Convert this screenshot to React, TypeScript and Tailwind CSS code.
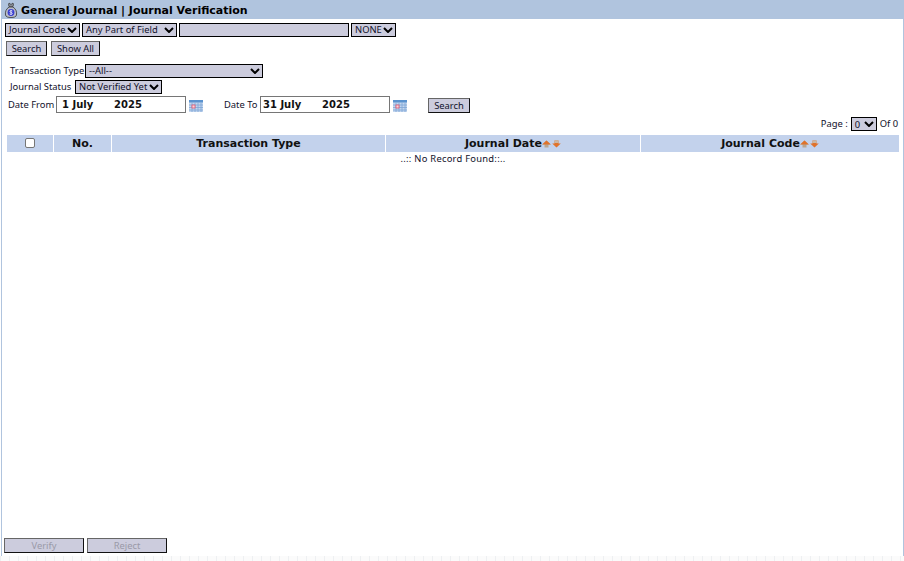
const tahoma = "[font-family:'Noto_Sans','DejaVu_Sans',sans-serif]";

function MoneyBag() {
  return (
    <svg width="14" height="16" viewBox="0 0 14 16" className="shrink-0">
      <path d="M5 1 L7 2.5 L9 1 L9.5 3 L8.5 5 L5.5 5 L4.5 3 Z" fill="#8a8f99" stroke="#333" strokeWidth="0.7" />
      <path d="M5 5 C2 7 1 10 1.5 13 C2 15 4 15.5 7 15.5 C10 15.5 12 15 12.5 13 C13 10 12 7 9 5 Z" fill="#b9bdc9" stroke="#333" strokeWidth="0.8" />
      <circle cx="7" cy="10.5" r="3.4" fill="#3a3fd0" />
      <path d="M8.4 9 C7.6 8.3 5.8 8.5 5.9 9.6 C6 10.7 8.3 10.2 8.3 11.4 C8.3 12.5 6.3 12.6 5.6 11.9 M7 7.8 V13" fill="none" stroke="#fff" strokeWidth="0.7" />
    </svg>
  );
}

function Calendar() {
  return (
    <svg width="14" height="12" viewBox="0 0 14 12" className="block shrink-0">
      <rect x="0" y="0" width="14" height="12" fill="#c4d6ee" />
      <rect x="0" y="0" width="14" height="2.5" fill="#5b93cf" />
      <path d="M0 5H14M0 7.5H14M0 10H14M3 2.5V12M6 2.5V12M9 2.5V12M12 2.5V12" stroke="#7fa6d6" strokeWidth="0.8" />
      <rect x="3" y="5" width="3" height="3" fill="#f6d5dc" stroke="#e0566f" strokeWidth="0.8" />
    </svg>
  );
}

function SortArrows() {
  return (
    <span className="inline-flex items-center gap-[1px] shrink-0 -mt-[2px]">
      <svg width="9" height="8" viewBox="0 0 9 8">
        <path d="M4.5 0.5 L8.8 4.5 L6.5 4.5 L6.5 7.5 L2.5 7.5 L2.5 4.5 L0.2 4.5 Z" fill="#b9a58f" />
        <path d="M4.5 0.5 L8.8 4.5 L0.2 4.5 Z" fill="#e0722a" />
      </svg>
      <svg width="9" height="8" viewBox="0 0 9 8">
        <path d="M2.5 0.5 L6.5 0.5 L6.5 3.5 L8.8 3.5 L4.5 7.5 L0.2 3.5 L2.5 3.5 Z" fill="#e0722a" />
        <path d="M2.5 0.5 L6.5 0.5 L6.5 3 L2.5 3 Z" fill="#c9b8a5" />
      </svg>
    </span>
  );
}

function Select({ w, children }: { w: string; children: string }) {
  return (
    <span className={`relative inline-flex items-center h-[14px] ${w} bg-[#ccccdd] border border-black text-[9.4px] leading-none text-[#11112b] pl-[3px] overflow-hidden whitespace-nowrap shrink-0`}>
      {children}
      <svg width="10" height="6" viewBox="0 0 10 6" className="absolute right-[2px] top-[3px]">
        <path d="M1 1 L5 5 L9 1" fill="none" stroke="#000" strokeWidth="2" />
      </svg>
    </span>
  );
}

function Btn({ w, children, disabled, mt }: { w: string; children: string; disabled?: boolean; mt?: string }) {
  return (
    <button className={`${w} h-[15px] bg-[#ccccdd] border border-t-[#666] border-l-[#666] border-r-[#111] border-b-[#111] text-[9.4px] leading-none ${disabled ? "text-[#9a9aa8]" : "text-[#11112b]"} ${mt ?? ""}`}>
      {children}
    </button>
  );
}

function DateInput({ value, pl }: { value: string; pl: string }) {
  return (
    <span className={`w-[130px] h-[17px] border border-[#767676] bg-white flex items-center ${pl} font-['DejaVu_Sans'] font-bold text-[10px] text-[#111] whitespace-pre`}>
      {value}
    </span>
  );
}

function Th({ w, children }: { w: string; children: React.ReactNode }) {
  return (
    <div className={`${w} h-full pt-[2px] bg-[#c3d2ec] flex items-center justify-center font-['DejaVu_Sans'] font-bold text-[11px] text-[#111]`}>
      {children}
    </div>
  );
}

export default function App() {
  return (
    <div className={`w-[904px] h-[561px] bg-white flex flex-col overflow-hidden ${tahoma} text-[9.4px] text-[#11112b]`}>
      <div className="h-[556px] ml-[1px] mr-0 border-x border-[#b0c4de] flex flex-col">
        <div className="-mx-[1px] h-[19px] bg-[#b0c4de] flex items-center pl-[3px] gap-[3px] shrink-0">
          <MoneyBag />
          <span className="pt-[4px] font-['DejaVu_Sans'] font-bold text-[11px] text-black">General Journal | Journal Verification</span>
        </div>

        <div className="flex gap-[2px] mt-[4px] ml-[3px] items-center">
          <Select w="w-[75px]">Journal Code</Select>
          <Select w="w-[95px]">Any Part of Field</Select>
          <span className="w-[170px] h-[14px] bg-[#ccccdd] border border-black" />
          <Select w="w-[45px]">NONE</Select>
        </div>

        <div className="flex gap-[4px] mt-[4px] ml-[4px]">
          <Btn w="w-[41px]">Search</Btn>
          <Btn w="w-[49px]">Show All</Btn>
        </div>

        <div className="flex items-center mt-[8px] ml-[8px] gap-[2px]">
          <span className="w-[73px] whitespace-nowrap">Transaction Type</span>
          <Select w="w-[178px]">--All--</Select>
        </div>
        <div className="flex items-center mt-[2px] ml-[8px] gap-[2px]">
          <span className="w-[63px] whitespace-nowrap">Journal Status</span>
          <Select w="w-[87px]">Not Verified Yet</Select>
        </div>

        <div className="flex items-center mt-[2px] ml-[6px] h-[17px]">
          <span className="w-[48px] whitespace-nowrap">Date From</span>
          <DateInput value={"1 July      2025"} pl="pl-[5px]" />
          <span className="ml-[3px] mt-[2px]"><Calendar /></span>
          <span className="ml-[21px] w-[36px] whitespace-nowrap">Date To</span>
          <DateInput value={"31 July      2025"} pl="pl-[2px]" />
          <span className="ml-[3px] mt-[2px]"><Calendar /></span>
          <Btn w="w-[42px]" mt="ml-[21px] mt-[2px]">Search</Btn>
        </div>

        <div className="flex justify-end items-center gap-[3px] mt-[4px] mr-[5px] h-[14px]">
          <span>Page :</span>
          <Select w="w-[26px]">0</Select>
          <span>Of 0</span>
        </div>

        <div className="flex gap-[1px] h-[17px] mt-[4px] ml-[5px] mr-[4px]">
          <Th w="w-[46px]">
            <span className="block w-[10px] h-[10px] -mt-[4px] bg-white border border-[#767676] rounded-[2px]" />
          </Th>
          <Th w="w-[57px]">No.</Th>
          <Th w="w-[273px]">Transaction Type</Th>
          <Th w="w-[254px]">Journal Date<SortArrows /></Th>
          <Th w="flex-1">Journal Code<SortArrows /></Th>
        </div>

        <div className="text-center leading-[13px] tracking-[0.25px] ml-[5px] mr-[4px]">..:: No Record Found::..</div>

        <div className="flex-1" />
        <div className="flex gap-[3px] ml-[2px] h-[15px]">
          <Btn w="w-[80px]" disabled>Verify</Btn>
          <Btn w="w-[80px]" disabled>Reject</Btn>
        </div>
        <div className="h-[3px]" />
      </div>
      <div className="h-[5px] bg-[repeating-linear-gradient(90deg,#eef0f2_0,#eef0f2_1px,#fbfbfb_1px,#fbfbfb_9px)]" />
    </div>
  );
}
